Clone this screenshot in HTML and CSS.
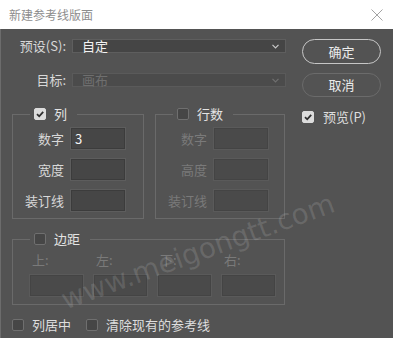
FILE: index.html
```html
<!DOCTYPE html>
<html lang="zh-CN">
<head>
<meta charset="utf-8">
<title>新建参考线版面</title>
<link rel="stylesheet" href="styles.css">
</head>
<body>
<div class="dialog">
  <div class="titlebar">
    <span class="title">新建参考线版面</span>
    <svg class="close" width="12" height="12" viewBox="0 0 12 12"><path d="M0.5 0.5 L11.5 11.5 M11.5 0.5 L0.5 11.5" stroke="#a3a3a3" stroke-width="1" fill="none"/></svg>
  </div>
  <div class="content">
    <div class="main">
      <div class="row">
        <span class="label">预设(S):</span>
        <div class="select"><span>自定</span><svg class="chev" width="7" height="5" viewBox="0 0 7 5"><path d="M0.5 0.8 L3.5 3.8 L6.5 0.8" stroke="#c8c8c8" stroke-width="1.2" fill="none"/></svg></div>
      </div>
      <div class="row second">
        <span class="label">目标:</span>
        <div class="select disabled"><span>画布</span><svg class="chev" width="7" height="5" viewBox="0 0 7 5"><path d="M0.5 0.8 L3.5 3.8 L6.5 0.8" stroke="#707070" stroke-width="1.2" fill="none"/></svg></div>
      </div>
      <div class="groups">
        <fieldset class="box">
          <legend><span class="cb checked"><svg width="10" height="10" viewBox="0 0 10 10"><path d="M2 5.2 L4.2 7.3 L8.2 2.8" stroke="#2e2e2e" stroke-width="1.8" fill="none"/></svg></span><span class="legtext">列</span></legend>
          <div class="fields">
            <span class="flabel">数字</span><div class="input"><span>3</span></div>
            <span class="flabel">宽度</span><div class="input"></div>
            <span class="flabel">装订线</span><div class="input"></div>
          </div>
        </fieldset>
        <fieldset class="box">
          <legend><span class="cb"></span><span class="legtext">行数</span></legend>
          <div class="fields off">
            <span class="flabel">数字</span><div class="input disabled"></div>
            <span class="flabel">高度</span><div class="input disabled"></div>
            <span class="flabel">装订线</span><div class="input disabled"></div>
          </div>
        </fieldset>
      </div>
      <fieldset class="box margins">
        <legend><span class="cb"></span><span class="legtext">边距</span></legend>
        <div class="mgrid">
          <div class="mcell"><span class="mlabel">上:</span><div class="input disabled"></div></div>
          <div class="mcell"><span class="mlabel">左:</span><div class="input disabled"></div></div>
          <div class="mcell"><span class="mlabel">下:</span><div class="input disabled"></div></div>
          <div class="mcell"><span class="mlabel">右:</span><div class="input disabled"></div></div>
        </div>
      </fieldset>
      <div class="bottom">
        <span class="check"><span class="cb"></span><span>列居中</span></span>
        <span class="check"><span class="cb"></span><span>清除现有的参考线</span></span>
      </div>
    </div>
    <div class="side">
      <div class="btn primary">确定</div>
      <div class="btn">取消</div>
      <span class="check preview"><span class="cb checked"><svg width="10" height="10" viewBox="0 0 10 10"><path d="M2 5.2 L4.2 7.3 L8.2 2.8" stroke="#2e2e2e" stroke-width="1.8" fill="none"/></svg></span><span>预览(P)</span></span>
    </div>
  </div>
  <div class="watermark">www.meigongtt.com</div>
</div>
</body>
</html>
```

FILE: styles.css
```css
* { box-sizing: border-box; }
html, body { margin: 0; padding: 0; }
body {
  width: 393px;
  height: 338px;
  overflow: hidden;
  background: #535353;
  font-family: "Noto Sans CJK SC", "Noto Sans", sans-serif;
  font-size: 13px;
  line-height: 14px;
  color: #dadada;
}
.dialog {
  position: relative;
  width: 393px;
  height: 338px;
  overflow: hidden;
}
.titlebar {
  height: 29px;
  background: #ffffff;
  display: flex;
  align-items: center;
  justify-content: space-between;
  padding: 0 10px 0 9px;
}
.title {
  color: #8d8d8d;
  font-size: 12px;
  letter-spacing: 0;
}
.close { display: block; }
.content {
  display: flex;
  height: 309px;
  padding: 10px 0 0 11px;
  border-left: 1px solid #6c6c6c;
}
.main {
  width: 274px;
  display: flex;
  flex-direction: column;
}
.row {
  display: flex;
  align-items: center;
  height: 14px;
}
.row.second { margin-top: 20px; }
.label {
  width: 54px;
  margin-right: 6px;
  text-align: right;
  white-space: nowrap;
  color: #d8d8d8;
}
.select {
  width: 214px;
  height: 14px;
  background: #454545;
  border: 1px solid #5e5e5e;
  display: flex;
  align-items: center;
  justify-content: space-between;
  padding: 0 6px 0 9px;
  color: #f2f2f2;
  font-size: 13px;
}
.select.disabled {
  background: #4b4b4b;
  border-color: #5a5a5a;
  color: #6f6f6f;
}
.chev { display: block; }
.groups {
  margin-top: 20px;
  display: grid;
  grid-template-columns: 132px 130px;
  column-gap: 11px;
}
.box {
  margin: 0;
  padding: 0;
  border: 1px solid #6a6a6a;
  min-width: 0;
}
.box legend {
  margin-left: 17px;
  padding: 0 10px 0 4px;
  height: 14px;
  display: flex;
  align-items: center;
}
.legtext { margin-left: 8px; color: #e4e4e4; }
.cb {
  width: 12px;
  height: 12px;
  border-radius: 2px;
  background: #464646;
  border: 1px solid #6f6f6f;
  display: inline-flex;
  align-items: center;
  justify-content: center;
  flex: none;
}
.cb.checked {
  background: #dcdcdc;
  border-color: #dcdcdc;
}
.cb svg { display: block; }
.fields {
  display: grid;
  grid-template-columns: 51px 54px;
  column-gap: 7px;
  row-gap: 10px;
  align-items: center;
  padding: 7px 0 7px 0;
}
.flabel {
  text-align: right;
  white-space: nowrap;
  color: #d8d8d8;
}
.fields.off .flabel { color: #7a7a7a; }
.input {
  height: 21px;
  background: #464646;
  border: 1px solid #3c3c3c;
  box-shadow: 0 0 0 1px #5d5d5d;
  display: flex;
  align-items: center;
  padding-left: 3px;
  color: #f4f4f4;
  font-size: 13px;
}
.input.disabled {
  background: #4a4a4a;
  border-color: #444444;
  box-shadow: 0 0 0 1px #5a5a5a;
}
.margins {
  margin-top: 13px;
  width: 273px;
}
.mgrid {
  display: grid;
  grid-template-columns: repeat(4, 53px);
  column-gap: 11px;
  padding: 7px 0 8px 17px;
}
.mcell {
  display: flex;
  flex-direction: column;
}
.mlabel {
  color: #7a7a7a;
  margin: 0 0 8px 2px;
}
.bottom {
  margin-top: 13px;
  display: flex;
  align-items: center;
  gap: 15px;
  height: 14px;
}
.check {
  display: inline-flex;
  align-items: center;
  gap: 8px;
  color: #dedede;
}
.side {
  margin-left: 16px;
  width: 79px;
  display: flex;
  flex-direction: column;
}
.btn {
  height: 25px;
  border: 1.5px solid #c6c6c6;
  border-radius: 13px;
  display: flex;
  align-items: center;
  justify-content: center;
  color: #ececec;
  font-size: 13px;
}
.btn + .btn {
  margin-top: 9px;
  height: 24px;
  border-color: #6b6b6b;
}
.preview {
  margin-top: 13px;
  gap: 9px;
}
.watermark {
  position: absolute;
  left: 198px;
  top: 252px;
  transform: translate(-50%, -50%) rotate(-20deg);
  font-family: "DejaVu Sans", sans-serif;
  font-size: 28px;
  line-height: 30px;
  white-space: nowrap;
  color: rgba(255, 255, 255, 0.13);
  pointer-events: none;
}
```
